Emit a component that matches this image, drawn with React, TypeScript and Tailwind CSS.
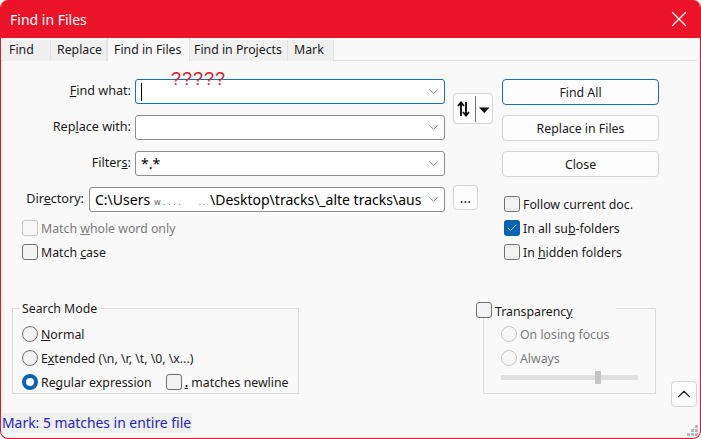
import { useState } from "react";
import { ChevronDown, Check, ChevronUp, X } from "lucide-react";

const tabs = [
  { name: "Find", w: "w-[48px]", pad: "pl-[6px]" },
  { name: "Replace", w: "w-[56px]", pad: "pl-[6px]" },
  { name: "Find in Files", w: "w-[83px]", pad: "pl-[6px]", active: true },
  { name: "Find in Projects", w: "w-[98px]", pad: "pl-[4px]" },
  { name: "Mark", w: "w-[46px]", pad: "pl-[6px]" },
];

const Combo = ({ value, focused, width }: { value?: React.ReactNode; focused?: boolean; width: string }) => (
  <div
    className={`${width} h-[25px] flex items-center justify-between bg-white rounded-[3px] border pl-[5px] pr-[3px] ${
      focused ? "border-[#1a6fb0]" : "border-[#8e8e8e]"
    }`}
  >
    <div className="flex-1 min-w-0 whitespace-nowrap overflow-hidden text-[14px] text-black">{value}</div>
    <ChevronDown className="w-[15px] h-[15px] text-[#6a6a6a] shrink-0" strokeWidth={1.2} />
  </div>
);

const Box = ({ checked, disabled }: { checked?: boolean; disabled?: boolean }) =>
  checked ? (
    <div className="w-4 h-4 rounded-[3px] bg-[#0a62b5] flex items-center justify-center shrink-0">
      <Check className="w-3 h-3 text-white" strokeWidth={1.5} />
    </div>
  ) : (
    <div
      className={`w-4 h-4 rounded-[3px] border shrink-0 ${
        disabled ? "border-[#c8c8c8] bg-[#f8f8f8]" : "border-[#6f6f6f] bg-[#f3f3f3]"
      }`}
    />
  );

const CheckBox = ({ label, checked, disabled }: { label: React.ReactNode; checked?: boolean; disabled?: boolean }) => (
  <div className={`flex items-center h-4 gap-[3px] whitespace-nowrap ${disabled ? "text-[#7a7a7a]" : "text-[#1a1a1a]"}`}>
    <Box checked={checked} disabled={disabled} />
    <span className="pt-[2px]">{label}</span>
  </div>
);

const Radio = ({ label, selected, disabled }: { label: React.ReactNode; selected?: boolean; disabled?: boolean }) => (
  <div className={`flex items-center h-4 gap-[3px] whitespace-nowrap ${disabled ? "text-[#7a7a7a]" : "text-[#1a1a1a]"}`}>
    {selected ? (
      <div className="w-4 h-4 rounded-full bg-[#0a62b5] flex items-center justify-center shrink-0">
        <div className="w-2 h-2 rounded-full bg-white" />
      </div>
    ) : (
      <div
        className={`w-4 h-4 rounded-full border shrink-0 ${
          disabled ? "border-[#c8c8c8] bg-[#f8f8f8]" : "border-[#6f6f6f] bg-[#f3f3f3]"
        }`}
      />
    )}
    <span className="pt-[2px]">{label}</span>
  </div>
);

const Btn = ({ children, primary }: { children: React.ReactNode; primary?: boolean }) => (
  <div
    className={`w-[157px] h-[26px] flex items-center justify-center rounded-[4px] border bg-[#fdfdfd] text-[#1a1a1a] pt-[2px] ${
      primary ? "border-[#1a6fb0]" : "border-[#d4d4d4]"
    }`}
  >
    {children}
  </div>
);

export default function App() {
  const [active] = useState("Find in Files");

  return (
    <div
      className="w-[701px] h-[439px] flex flex-col overflow-hidden bg-[#f9f9f9] border-x border-b border-[#ea1328] rounded-[8px] text-[12.3px] text-[#1a1a1a]"
      style={{ fontFamily: '"Noto Sans", sans-serif' }}
    >
      {/* Title bar */}
      <div className="h-[38px] shrink-0 bg-[#ea1328] flex items-center justify-between pl-[9px] pr-[8px]">
        <span className="text-[14px] text-white">Find in Files</span>
        <X className="w-[26px] h-[26px] text-white" strokeWidth={1.2} />
      </div>

      {/* Tabs */}
      <div className="flex h-[23px] pl-[2px] mr-[2px] border-b border-[#e2e2e2] shrink-0">
        {tabs.map((t) => (
          <div
            key={t.name}
            className={`${t.w} ${t.pad} flex shrink-0 ${
              t.name === active
                ? "h-[23px] bg-[#f9f9f9] border-x border-[#e2e2e2] items-start pt-[3px] relative z-10"
                : "h-[21px] mt-[2px] bg-[#f0f0f0] border-r border-[#e2e2e2] items-center"
            }`}
          >
            {t.name}
          </div>
        ))}
      </div>

      {/* Top part */}
      <div className="flex h-[239px] shrink-0">
        <div className="w-[444px] shrink-0 pt-[18px] relative">
          <div className="flex items-center justify-end gap-[4px] h-[25px]">
            <span className="text-[12.6px]">
              <u>F</u>ind what:
            </span>
            <Combo
              width="w-[310px]"
              focused
              value={<div className="w-px h-[18px] bg-black" />}
            />
          </div>
          <div className="flex items-center justify-end gap-[4px] h-[25px] mt-[11px]">
            <span className="text-[12.6px]">
              Rep<u>l</u>ace with:
            </span>
            <Combo width="w-[310px]" />
          </div>
          <div className="flex items-center justify-end gap-[4px] h-[25px] mt-[11px]">
            <span className="text-[12.6px]">
              Filter<u>s</u>:
            </span>
            <Combo width="w-[310px]" value="*.*" />
          </div>
          <div className="flex items-center justify-end gap-[5px] h-[25px] mt-[11px]">
            <span className="text-[12.6px]">
              Dir<u>e</u>ctory:
            </span>
            <Combo
              width="w-[356px]"
              value={
                <span>
                  C:\Users<span className="text-[8px] text-[#555] tracking-[3px] ml-[4px]">w....</span>
                  <span className="text-[8px] text-[#555] tracking-[2px] ml-[15px] mr-[3px]">..</span>\Desktop\tracks\_alte tracks\aus
                </span>
              }
            />
          </div>
          <div className="flex flex-col gap-2 pl-[21px] mt-[8px]">
            <CheckBox
              disabled
              label={
                <>
                  Match <u>w</u>hole word only
                </>
              }
            />
            <CheckBox
              label={
                <>
                  Match <u>c</u>ase
                </>
              }
            />
          </div>
          {/* red question marks scribbled over the field */}
          <span
            className="absolute left-[170px] top-[7px] text-[18px] leading-[22px] tracking-[1px] text-[#d4202a]"
            style={{ fontFamily: '"Liberation Sans", sans-serif' }}
          >
            ?????
          </span>
        </div>

        <div className="w-[49px] ml-[8px] shrink-0 pt-[32px]">
          <div className="w-10 h-[31px] flex items-center rounded-[4px] border border-[#d4d4d4] bg-[#fdfdfd]">
            <svg width="38" height="29" viewBox="0 0 38 29" className="shrink-0">
              <path d="M7 22V9M4 12l3-3.5 3 3.5M12 8v13.5M9 18l3 3.5 3-3.5" fill="none" stroke="#000" strokeWidth="1.8" />
              <path d="M21.5 2v26" stroke="#777" strokeWidth="1" />
              <path d="M25 13.5h10.5l-5.25 5.5z" fill="#000" />
            </svg>
          </div>
          <div className="w-[25px] h-[25px] mt-[61px] flex items-center justify-center rounded-[4px] border border-[#d4d4d4] bg-[#fdfdfd] text-[14px] leading-none">
            ...
          </div>
        </div>

        <div className="pt-[18px]">
          <div className="flex flex-col gap-[10px]">
            <Btn primary>Find All</Btn>
            <Btn>Replace in Files</Btn>
            <Btn>Close</Btn>
          </div>
          <div className="flex flex-col gap-2 pl-[2px] mt-[19px]">
            <CheckBox label="Follow current doc." />
            <CheckBox
              checked
              label={
                <>
                  In all su<u>b</u>-folders
                </>
              }
            />
            <CheckBox
              label={
                <>
                  In <u>h</u>idden folders
                </>
              }
            />
          </div>
        </div>
      </div>

      {/* Group boxes */}
      <div className="flex items-start pl-[11px] shrink-0">
        <fieldset className="w-[287px] h-[94px] border border-[#dcdcdc] pl-[9px]">
          <legend className="-ml-[2px] px-[2px] h-4 leading-[18px]">Search Mode</legend>
          <div className="flex flex-col gap-2 mt-[10px]">
            <Radio
              label={
                <>
                  <u>N</u>ormal
                </>
              }
            />
            <Radio
              label={
                <>
                  E<u>x</u>tended (\n, \r, \t, \0, \x...)
                </>
              }
            />
            <div className="flex items-center gap-[14px]">
              <Radio
                selected
                label={
                  <>
                    Re<u>g</u>ular expression
                  </>
                }
              />
              <CheckBox
                label={
                  <>
                    <u className="font-bold">.</u> matches newline
                  </>
                }
              />
            </div>
          </div>
        </fieldset>

        <fieldset className="w-[173px] h-[94px] ml-[184px] border border-[#dcdcdc] pl-[17px]">
          <legend className="-ml-[25px] w-[140px] h-4 leading-4 flex items-center gap-[3px] relative top-[2px]">
            <Box />
            <span className="pt-[4px]">
              Transparenc<u>y</u>
            </span>
          </legend>
          <div className="flex flex-col gap-2 mt-[10px]">
            <Radio disabled label="On losing focus" />
            <Radio disabled label="Always" />
            <div className="w-[137px] h-[5px] bg-[#e0e0e0] mt-[1px] flex items-center pl-[94px]">
              <div className="w-[6px] h-[13px] bg-[#c6c6c6] shrink-0" />
            </div>
          </div>
        </fieldset>

        <div className="w-[26px] h-[26px] ml-[15px] mt-[81px] flex items-center justify-center rounded-[4px] border border-[#d4d4d4] bg-[#fdfdfd]">
          <ChevronUp className="w-[22px] h-[22px] text-[#1a1a1a]" strokeWidth={1.2} />
        </div>
      </div>

      {/* Status line */}
      <div className="flex items-end justify-between flex-1 min-h-0">
        <div className="ml-px mb-[5px] w-[190px] h-[20px] leading-[20px] bg-[#f0f0f0] text-[13.9px] text-[#2323c8] whitespace-nowrap">
          Mark: 5 matches in entire file
        </div>
        <svg width="12" height="12" viewBox="0 0 12 12" className="mb-[1px] mr-[1px]" fill="#b8b8b8">
          <rect x="8" y="0" width="3" height="3" />
          <rect x="4" y="4" width="3" height="3" />
          <rect x="8" y="4" width="3" height="3" />
          <rect x="0" y="8" width="3" height="3" />
          <rect x="4" y="8" width="3" height="3" />
          <rect x="8" y="8" width="3" height="3" />
        </svg>
      </div>
    </div>
  );
}
